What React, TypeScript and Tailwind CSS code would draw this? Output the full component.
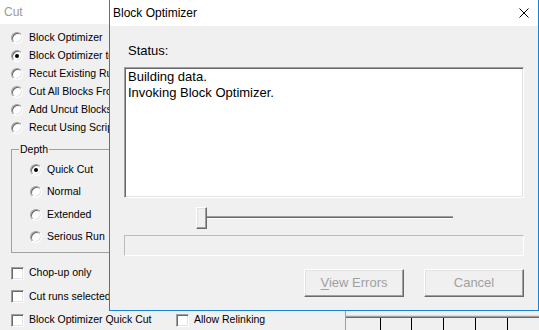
import React from "react";

const raised =
  "border border-t-white border-l-white border-r-[#696969] border-b-[#696969] shadow-[inset_-1px_-1px_0_#a0a0a0,inset_1px_1px_0_#e3e3e3]";
const sunken =
  "border border-t-[#a0a0a0] border-l-[#a0a0a0] border-r-white border-b-white shadow-[inset_1px_1px_0_#696969,inset_-1px_-1px_0_#e3e3e3]";

function Radio({ checked }: { checked?: boolean }) {
  return (
    <div
      className={`w-[12px] h-[12px] rounded-full bg-white shrink-0 flex items-center justify-center ${sunken}`}
    >
      {checked && <div className="w-[4px] h-[4px] rounded-full bg-black" />}
    </div>
  );
}

function Check() {
  return <div className={`w-[13px] h-[13px] bg-white shrink-0 ${sunken}`} />;
}

export default function App() {
  const topRadios = [
    { t: "Block Optimizer", c: false },
    { t: "Block Optimizer to Existing", c: true },
    { t: "Recut Existing Runs", c: false },
    { t: "Cut All Blocks From Scratch", c: false },
    { t: "Add Uncut Blocks", c: false },
    { t: "Recut Using Script", c: false },
  ];
  const depth = [
    { t: "Quick Cut", c: true },
    { t: "Normal", c: false },
    { t: "Extended", c: false },
    { t: "Serious Run", c: false },
  ];
  return (
    <div className="w-[539px] h-[330px] relative overflow-hidden bg-[#f0f0f0] font-['Liberation_Sans',Arial,sans-serif] text-black">
      {/* underlying window */}
      <div className="h-[24px] bg-white pl-[4px] text-[12px] leading-[24px] text-[#9a9a9a]">
        Cut
      </div>
      <div className="flex flex-col mt-[4.5px] w-[109px] overflow-hidden">
        {topRadios.map((r) => (
          <div
            key={r.t}
            className="h-[18px] flex items-center pl-[11px] gap-[6px] text-[10.5px] whitespace-nowrap"
          >
            <Radio checked={r.c} />
            <span>{r.t}</span>
          </div>
        ))}
      </div>
      <fieldset className="ml-[11px] mt-[6.5px] w-[160px] border border-[#a0a0a0] pt-[3.5px] pb-[3px]">
        <legend className="ml-[7px] px-[1px] text-[10.5px] leading-[12px]">Depth</legend>
        {depth.map((r) => (
          <div
            key={r.t}
            className="h-[22.5px] flex items-center pl-[18px] gap-[5px] text-[10.5px] whitespace-nowrap"
          >
            <Radio checked={r.c} />
            <span>{r.t}</span>
          </div>
        ))}
      </fieldset>
      <div className="mt-[9px] flex flex-col">
        <div className="h-[23.5px] w-[109px] overflow-hidden flex items-center pl-[11px] gap-[5px] text-[10.5px] whitespace-nowrap">
          <Check />
          <span>Chop-up only</span>
        </div>
        <div className="h-[23.5px] w-[109px] overflow-hidden flex items-center pl-[11px] gap-[5px] text-[10.5px] whitespace-nowrap">
          <Check />
          <span>Cut runs selected only</span>
        </div>
        <div className="h-[23.5px] flex items-start text-[10.5px] whitespace-nowrap">
          <div className="w-[176px] shrink-0 h-full flex items-center pl-[11px] gap-[5px]">
            <Check />
            <span>Block Optimizer Quick Cut</span>
          </div>
          <div className="w-[169px] shrink-0 h-full flex items-center gap-[5px]">
            <Check />
            <span>Allow Relinking</span>
          </div>
          <div className="w-[194px] shrink-0 mt-[1.5px] h-[30px] border-l border-[#a0a0a0] flex flex-col">
            <div className="h-[6px] border-b border-[#dcdcdc]" />
            <div className="h-[2px] border-t border-[#a0a0a0] bg-[#696969]" />
            <div className="flex flex-1">
              <div className="w-[37px]" />
              <div className="w-[35px] border-l border-black" />
              <div className="w-[35px] border-l border-black" />
              <div className="w-[35px] border-l border-black" />
              <div className="w-[35px] border-l border-black" />
              <div className="w-[35px] border-l border-black" />
            </div>
          </div>
        </div>
      </div>

      {/* dialog window */}
      <div className="absolute left-[109px] top-[-1px] w-[430px] h-[312px] border border-[#1883d7] bg-[#f0f0f0] flex flex-col">
        <div className="h-[26px] bg-white flex items-center justify-between pl-[3px] pr-[9px]">
          <span className="text-[12px] leading-[26px]">Block Optimizer</span>
          <svg width="10" height="10" viewBox="0 0 10 10" className="block">
            <path d="M0.5 0.5 L9.5 9.5 M9.5 0.5 L0.5 9.5" stroke="#000" strokeWidth="1" fill="none" />
          </svg>
        </div>
        <div className="flex-1 flex flex-col px-[14px] pt-[16.5px]">
          <div className="text-[13px] leading-[15px] pl-[4px]">Status:</div>
          <div className={`mt-[9px] h-[131px] bg-white pl-[3px] pt-[1px] text-[13px] leading-[16.5px] ${sunken}`}>
            <div>Building data.</div>
            <div>Invoking Block Optimizer.</div>
          </div>
          <div className="mt-[9px] h-[22px] relative">
            <div className="absolute left-[77px] top-[9px] w-[252px] h-[3px] border-t border-[#a0a0a0] bg-[#696969] border-b border-b-white" />
            <div className={`absolute left-[72px] top-0 w-[11px] h-[22px] bg-[#f0f0f0] ${raised}`} />
          </div>
          <div className="mt-[6px] h-[21px] border border-t-[#bcbcbc] border-l-[#bcbcbc] border-r-white border-b-white" />
          <div className="mt-[13px] flex justify-end gap-[20px]">
            <div className={`w-[100px] h-[28px] flex items-center justify-center text-[13px] text-[#a0a0a0] bg-[#f0f0f0] ${raised}`}>
              <span>
                <span className="underline underline-offset-2">V</span>iew Errors
              </span>
            </div>
            <div className={`w-[100px] h-[28px] flex items-center justify-center text-[13px] text-[#a0a0a0] bg-[#f0f0f0] ${raised}`}>
              Cancel
            </div>
          </div>
        </div>
      </div>
    </div>
  );
}
